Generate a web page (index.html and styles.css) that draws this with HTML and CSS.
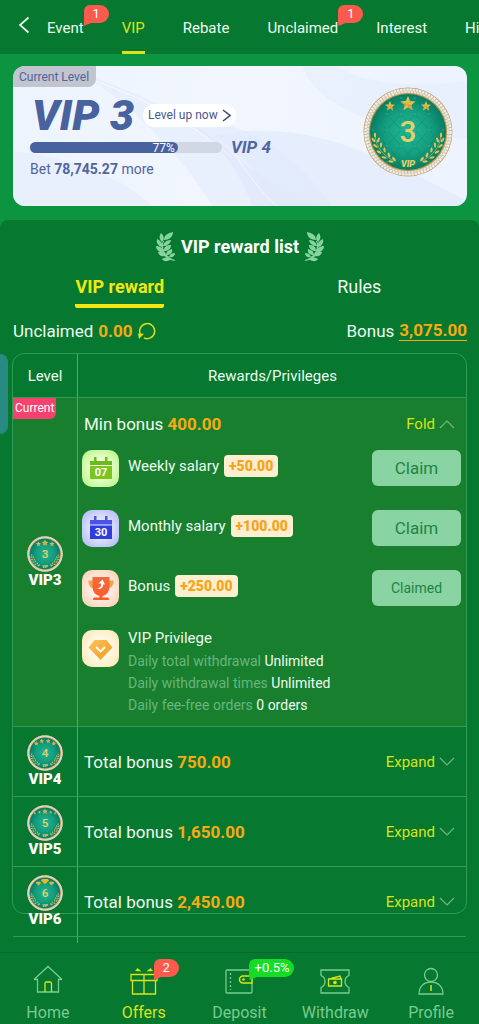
FILE: index.html
```html
<!DOCTYPE html>
<html lang="en">
<head>
<meta charset="utf-8">
<meta name="viewport" content="width=device-width, initial-scale=1">
<title>VIP</title>
<link rel="stylesheet" href="styles.css">
</head>
<body>
<svg class="defs" width="0" height="0" aria-hidden="true">
  <defs>
    <radialGradient id="teal"><stop offset="0" stop-color="#1fb896"/><stop offset=".6" stop-color="#149f80"/><stop offset="1" stop-color="#067d63"/></radialGradient>
    <linearGradient id="gold" x1="0" y1="0" x2="1" y2="1"><stop offset="0" stop-color="#fbe9a0"/><stop offset=".5" stop-color="#e2b53c"/><stop offset="1" stop-color="#f5dd85"/></linearGradient>
    <linearGradient id="amber" x1="0" y1="0" x2="1" y2="1"><stop offset="0" stop-color="#fcc35a"/><stop offset="1" stop-color="#f39a1c"/></linearGradient>
    <linearGradient id="flame" x1="0" y1="0" x2="0" y2="1"><stop offset="0" stop-color="#f26a3c"/><stop offset="1" stop-color="#ff5a2c"/></linearGradient>
    <pattern id="quilt" width="14" height="16" patternUnits="userSpaceOnUse" x="3" y="3"><path d="M0 0L14 16M14 0L0 16" stroke="#0b7f66" stroke-width="1" opacity=".4"/><circle cx="7" cy="8" r=".8" fill="#5fdcbb" opacity=".5"/></pattern>
    <symbol id="star" viewBox="0 0 20 20"><path d="M10 0l2.700 6.800 7.300.5-5.600 4.700 1.800 7.100L10 15.200 3.800 19.100l1.800-7.100L0 7.300l7.300-.5z" fill="url(#gold)"/><path d="M10 0v11l4.400 1 1.800 7.100L10 15.200zM10 11L0 7.300l5.600 4.700z" fill="#c98a26" opacity=".55"/></symbol>
    <g id="spray" fill="url(#gold)">
      <path d="M12 48c1 12 8 21 20 26" fill="none" stroke="#d9b450" stroke-width=".7"/>
      <ellipse cx="12" cy="48" rx="1.100" ry="2.600"/>
      <ellipse cx="10.500" cy="53" rx="1.100" ry="2.600" transform="rotate(-35 10.500 53)"/><ellipse cx="15.500" cy="53" rx="1.100" ry="2.600" transform="rotate(25 15.500 53)"/>
      <ellipse cx="12.500" cy="59" rx="1.100" ry="2.600" transform="rotate(-50 12.500 59)"/><ellipse cx="18" cy="58" rx="1.100" ry="2.600" transform="rotate(5 18 58)"/>
      <ellipse cx="16" cy="65" rx="1.100" ry="2.600" transform="rotate(-60 16 65)"/><ellipse cx="21.500" cy="63" rx="1.100" ry="2.600" transform="rotate(-5 21.500 63)"/>
      <ellipse cx="21" cy="70.500" rx="1.100" ry="2.600" transform="rotate(-75 21 70.500)"/><ellipse cx="26" cy="68" rx="1.100" ry="2.600" transform="rotate(-20 26 68)"/>
      <ellipse cx="28" cy="74.500" rx="1.100" ry="2.600" transform="rotate(-85 28 74.500)"/><ellipse cx="31" cy="72" rx="1.100" ry="2.600" transform="rotate(-35 31 72)"/>
    </g>
    <g id="medal">
      <circle cx="45" cy="45" r="44.500" fill="#c7a35b"/>
      <circle cx="45" cy="45" r="41.500" fill="none" stroke="#c4bdae" stroke-width="4.800"/>
      <circle cx="45" cy="45" r="42.500" fill="none" stroke="#f6f2e8" stroke-width="2.200" stroke-dasharray="2.200 1"/>
      <circle cx="45" cy="45" r="40.200" fill="none" stroke="#eae5d8" stroke-width="2" stroke-dasharray="2.200 1"/>
      <circle cx="45" cy="45" r="38.800" fill="#b9923e"/>
      <circle cx="45" cy="45" r="38" fill="url(#teal)"/>
      <circle cx="45" cy="45" r="38" fill="url(#quilt)"/>
      <use href="#spray"/><use href="#spray" transform="translate(90 0) scale(-1 1)"/>
    </g>
    <symbol id="laurel" viewBox="0 0 20 30">
      <g fill="#86d39d"><path d="M8 9C5 16 9 25 19 28l-.5 1C7 27 3 17 7 9z"/>
      <path d="M8 8C8 3 12 1 17 0c0 5-4 8-9 8zM6 10C3 7 3 4 5 1c3 3 4 6 1 9zM6 15C2 14 0 11 1 7c4 2 6 4 5 8zM7 14c1-4 4-6 8-6-1 4-4 6-8 6zM7 20c-4 0-7-2-7-6 4 0 7 2 7 6zM8 19c0-4 2-6 7-6 0 4-3 6-7 6zM10 24c-4 1-7 0-8-4 4-1 7 1 8 4zM10 23c0-3 2-5 6-6 1 4-2 6-6 6zM15 27c-3 3-7 3-9 0 3-2 7-2 9 0zM13 25c1-3 3-4 6-4 0 3-2 5-6 4z"/></g>
    </symbol>
    <symbol id="chevron" viewBox="0 0 16 10"><path d="M1 1l7 7 7-7" fill="none" stroke="#72b583" stroke-width="1.200"/></symbol>
  </defs>
</svg>

<header class="topbar">
  <button class="back" type="button" aria-label="Back"><svg width="12" height="18" viewBox="0 0 12 18"><path d="M10.500 1.500L2 9l8.500 7.500" fill="none" stroke="#e8fbe9" stroke-width="1.700"/></svg></button>
  <nav class="tabs">
    <a href="#event">Event<span class="badge">1</span></a>
    <a href="#vip" class="active">VIP</a>
    <a href="#rebate">Rebate</a>
    <a href="#unclaimed">Unclaimed<span class="badge">1</span></a>
    <a href="#interest">Interest</a>
    <a href="#history">History</a>
  </nav>
</header>

<section class="hero">
  <div class="card">
    <svg class="swirl" viewBox="0 0 455 140" preserveAspectRatio="none" aria-hidden="true">
      <path d="M70 8c60 20 110 45 145 76s60 40 90 56H200C170 90 120 40 70 8z" fill="#e2ebfb" opacity=".6"/>
      <path d="M150 42c70 12 120 30 170 98H240c-15-40-40-75-90-98z" fill="#d6e2f6" opacity=".35"/>
      <path d="M200 70c90-20 170 20 255 65v5H260c-10-30-30-55-60-70z" fill="#dfe9fb" opacity=".6"/>
      <path d="M290 0c10 30 50 50 90 62 25 8 50 10 75 10V15C400 22 350 18 325 0z" fill="#e6eefd" opacity=".7"/>
      <path d="M0 85c50 5 100 20 140 55H0z" fill="#e4edfb" opacity=".6"/>
      <path d="M75 12c60 22 105 45 145 80M222 88c12 18 25 36 42 52" fill="none" stroke="#fff" stroke-width="1" opacity=".6"/>
    </svg>
    <span class="current-level">Current Level</span>
    <div class="card-body">
      <div class="level">
        <div class="level-head"><h1>VIP 3</h1><button class="level-up" type="button">Level up now<svg width="9" height="13" viewBox="0 0 9 13"><path d="M1 1l7 5.500L1 12" fill="none" stroke="#3b4674" stroke-width="1.500"/></svg></button></div>
        <div class="progress-row"><div class="bar" role="progressbar" aria-label="Level progress" aria-valuenow="77" aria-valuemin="0" aria-valuemax="100"><div class="fill" style="width:77%">77%</div></div><span class="next">VIP 4</span></div>
        <p class="bet">Bet <b>78,745.27</b> more</p>
      </div>
      <svg class="medal-lg" viewBox="0 0 90 90" role="img" aria-label="VIP 3 medal">
        <use href="#medal"/>
        <use href="#star" x="22" y="14" width="10" height="10"/><use href="#star" x="37.500" y="9" width="15" height="15"/><use href="#star" x="58" y="14" width="10" height="10"/>
        <text class="num" x="45" y="55">3</text><text class="vip" x="45" y="80">VIP</text>
      </svg>
    </div>
  </div>
</section>

<main class="panel">
  <h2><svg width="20" height="30"><use href="#laurel"/></svg>VIP reward list<svg class="flip" width="20" height="30"><use href="#laurel"/></svg></h2>
  <nav class="subtabs"><a href="#reward" class="active">VIP reward</a><a href="#rules">Rules</a></nav>
  <div class="totals">
    <span class="total">Unclaimed <b>0.00</b>
      <button class="refresh" type="button" aria-label="Refresh"><svg width="18" height="18" viewBox="0 0 18 18"><path d="M2.500 12.500A7.500 7.500 0 1 1 6 15.900" fill="none" stroke="#d5e21c" stroke-width="1.500"/><path d="M0 11.500l6 .3L1 17z" fill="#d5e21c"/></svg></button></span>
    <span class="total">Bonus <a href="#records">3,075.00</a></span>
  </div>
  <div class="frame">
    <table>
      <thead><tr><th class="lv">Level</th><th>Rewards/Privileges</th></tr></thead>
      <tbody>
        <tr class="open">
          <td class="lv"><span class="current">Current</span>
            <svg class="medal" viewBox="0 0 90 90"><use href="#medal"/><use href="#star" x="22" y="13" width="13" height="13"/><use href="#star" x="37" y="9" width="16" height="16"/><use href="#star" x="56" y="13" width="13" height="13"/><text class="num" x="45" y="55">3</text><text class="vip" x="45" y="80">VIP</text></svg>
            <span class="name">VIP3</span></td>
          <td>
            <div class="summary"><span>Min bonus <b>400.00</b></span><button type="button">Fold<svg class="up" width="16" height="10"><use href="#chevron"/></svg></button></div>
            <ul class="rewards">
              <li>
                <svg class="tile green" viewBox="0 0 37 37"><path d="M8 11h22v4H8zM8 16h22v13H8z" fill="#6cba1b"/><path d="M8 16h22v13H8z" fill="#7cc51e"/><path d="M12 7h2.500v6H12zM23 7h2.500v6H23z" fill="#6cba1b"/><text x="19" y="26">07</text></svg>
                <span class="label">Weekly salary <b>+50.00</b></span><button type="button">Claim</button></li>
              <li>
                <svg class="tile blue" viewBox="0 0 37 37"><path d="M8 10h22v4.500H8z" fill="#4b54e8"/><path d="M8 15.500h22V29H8z" fill="#2f3ddf"/><path d="M12 6h2.500v6H12zM23 6h2.500v6H23z" fill="#4b54e8"/><text x="19" y="26">30</text></svg>
                <span class="label">Monthly salary <b>+100.00</b></span><button type="button">Claim</button></li>
              <li>
                <svg class="tile red" viewBox="0 0 37 37"><path d="M6.500 10.500H12V19C8.500 18 6 14.500 6.500 10.500zM26 10.500h5.500C32 14.500 29.500 18 26 19z" fill="#f9a24b"/><path d="M10.500 7h17v9c0 6-3 9-7 10v1.500h4.500c1.500 0 2 .5 2 2.500H11c0-2 .5-2.500 2-2.500h4.500V26c-4-1-7-4-7-10z" fill="url(#flame)"/><path d="M15 18.500c3.500-.5 4.500-2.500 4-5h-2.500l4-4 2.500 5h-2c.5 3-2 5.500-6 4z" fill="#fff"/></svg>
                <span class="label">Bonus <b>+250.00</b></span><button type="button" class="claimed" disabled>Claimed</button></li>
              <li>
                <svg class="tile yellow" viewBox="0 0 37 37"><path d="M12.500 10h12l6 7.500L18.500 30 6.500 17.500z" fill="url(#amber)"/><path d="M14 17l4.500 4.500L23 17" fill="none" stroke="#fff" stroke-width="1.800"/></svg>
                <div class="privilege"><h3>VIP Privilege</h3><p>Daily total withdrawal <span>Unlimited</span></p><p>Daily withdrawal times <span>Unlimited</span></p><p>Daily fee-free orders <span>0 orders</span></p></div></li>
            </ul>
          </td>
        </tr>
        <tr class="shut">
          <td class="lv"><svg class="medal" viewBox="0 0 90 90"><use href="#medal"/><use href="#star" x="17" y="15" width="12" height="12"/><use href="#star" x="31" y="9" width="12" height="12"/><use href="#star" x="47" y="9" width="12" height="12"/><use href="#star" x="61" y="15" width="12" height="12"/><text class="num" x="45" y="55">4</text><text class="vip" x="45" y="80">VIP</text></svg><span class="name">VIP4</span></td>
          <td><div class="summary"><span>Total bonus <b>750.00</b></span><button type="button">Expand<svg width="16" height="10"><use href="#chevron"/></svg></button></div></td>
        </tr>
        <tr class="shut">
          <td class="lv"><svg class="medal" viewBox="0 0 90 90"><use href="#medal"/><use href="#star" x="16" y="17" width="7" height="7"/><use href="#star" x="27" y="14" width="8" height="8"/><use href="#star" x="38" y="9" width="14" height="14"/><use href="#star" x="55" y="14" width="8" height="8"/><use href="#star" x="67" y="17" width="7" height="7"/><text class="num" x="45" y="55">5</text><text class="vip" x="45" y="80">VIP</text></svg><span class="name">VIP5</span></td>
          <td><div class="summary"><span>Total bonus <b>1,650.00</b></span><button type="button">Expand<svg width="16" height="10"><use href="#chevron"/></svg></button></div></td>
        </tr>
        <tr class="shut">
          <td class="lv"><svg class="medal" viewBox="0 0 90 90"><use href="#medal"/><path d="M38 10h14l3 4-10 9-10-9zM24 17h9l2 3-6 6-7-6zM57 17h9l2 3-7 6-6-6z" fill="#e8b62c"/><text class="num" x="45" y="55">6</text><text class="vip" x="45" y="80">VIP</text></svg><span class="name">VIP6</span></td>
          <td><div class="summary"><span>Total bonus <b>2,450.00</b></span><button type="button">Expand<svg width="16" height="10"><use href="#chevron"/></svg></button></div></td>
        </tr>
        <tr class="tail" aria-hidden="true"><td class="lv"></td><td></td></tr>
      </tbody>
    </table>
  </div>
</main>

<nav class="bottom">
  <a href="#home"><svg width="32" height="30" viewBox="0 0 32 30"><path d="M2 14.500L16 1.500l14 13M5.500 14.500H2M30 14.500h-3.500M5.500 13.500V27h21V13.500" fill="none" stroke="#79cb90" stroke-width="1.300"/><path d="M13 27V18.500q0-1.500 1.500-1.500h3.500q1.500 0 1.500 1.500V27" fill="none" stroke="#d9e31a" stroke-width="1.300"/></svg>Home</a>
  <a href="#offers" class="active"><svg width="32" height="30" viewBox="0 0 32 30"><path d="M3 9.500h26v6H3zM4.500 15.500h23V29h-23zM16 9.500V29" fill="none" stroke="#d9e31a" stroke-width="1.300"/><path d="M7 6l2.500-3 4 3.500zM25 6l-2.500-3-4 3.500z" fill="#d9e31a"/></svg><span class="badge">2</span>Offers</a>
  <a href="#deposit"><svg width="32" height="30" viewBox="0 0 32 30"><path d="M29 5H4q-1 0-1 1v21q0 1 1 1h24q1 0 1-1v-9M29 5v6" fill="none" stroke="#79cb90" stroke-width="1.300"/><path d="M7.500 8v17" stroke="#79cb90" stroke-width="1.300" stroke-dasharray="2 2"/><path d="M29 11h-9a3.500 3.500 0 0 0 0 7h9z" fill="none" stroke="#d9e31a" stroke-width="1.500"/><circle cx="20.500" cy="14.500" r="1.300" fill="#d9e31a"/></svg><span class="badge lime">+0.5%</span>Deposit</a>
  <a href="#withdraw"><svg width="32" height="30" viewBox="0 0 32 30"><path d="M2 5h28v5.500a6.500 6.500 0 0 0 0 12V28H2v-5.500a6.500 6.500 0 0 0 0-12z" fill="none" stroke="#79cb90" stroke-width="1.300"/><path d="M9.500 14h13v7h-13zM12 13.500l9-2.500.8 2.500" fill="none" stroke="#d9e31a" stroke-width="1.300"/><circle cx="16" cy="17.500" r="1.800" fill="#d9e31a"/></svg>Withdraw</a>
  <a href="#profile"><svg width="32" height="30" viewBox="0 0 32 30"><circle cx="16" cy="10" r="6.500" fill="none" stroke="#79cb90" stroke-width="1.300"/><path d="M4 29c0-7 4.500-12 12-12s12 5 12 12z" fill="none" stroke="#79cb90" stroke-width="1.300"/><path d="M16 20v6" stroke="#d9e31a" stroke-width="1.500"/></svg>Profile</a>
</nav>
<button class="side-handle" type="button" aria-label="Open side panel"></button>
</body>
</html>
```
FILE: styles.css
```css
* { box-sizing: border-box; }
body { margin: 0; height: 100vh; display: flex; flex-direction: column; position: relative; overflow: hidden; background: #067830; color: #eefbef; font-family: Roboto, "Liberation Sans", sans-serif; }
a { color: inherit; text-decoration: none; }
button { font: inherit; color: inherit; border: 0; background: none; padding: 0; }
h1, h2, h3, p, ul { margin: 0; padding: 0; }
ul { list-style: none; }
.defs { position: absolute; }

.topbar { height: 54px; display: flex; flex: none; }
.back { width: 47px; flex: none; padding: 0 0 4px; line-height: 0; }
.tabs { flex: 1; min-width: 0; display: flex; gap: 38px; overflow: hidden; font-size: 15px; line-height: 56px; }
.tabs a { position: relative; flex: none; height: 54px; }
.tabs .active { color: #d9e31a; border-bottom: 3px solid #d9e31a; }
.badge { position: absolute; left: 100%; top: 5px; width: 25px; height: 18px; border-radius: 6px 9px 9px 0; background: #fb5b4c; color: #fff; font-size: 13px; line-height: 18px; text-align: center; }
.badge::after { content: ""; position: absolute; left: 0; bottom: -3px; width: 8px; height: 8px; background: inherit; clip-path: polygon(0 0, 100% 0, 100% 60%, 0 100%); }

.hero { flex: none; padding: 12px 12px 22px 13px; background: #0d9440; }
.card { position: relative; height: 140px; border-radius: 12px; overflow: hidden; background: linear-gradient(100deg, #eef4fe, #f1f6ff 50%, #edf3ff); color: #50649f; }
.swirl { position: absolute; inset: 0; width: 100%; height: 100%; }
.current-level { position: absolute; left: 0; top: 0; padding: 0 7px 0 6px; height: 21px; font-size: 12px; line-height: 23px; background: #c2c5ce; border-radius: 0 0 8px 0; }
.card-body { position: relative; display: flex; justify-content: space-between; align-items: center; padding: 0 14px 0 17px; }
.level { flex: 1; padding-top: 27px; }
.level-head { display: flex; align-items: center; gap: 9px; height: 44px; padding-left: 2px; }
.level-head h1 { font-size: 43px; line-height: 44px; font-weight: 900; font-style: italic; color: #48619f; }
.level-up { display: flex; align-items: center; gap: 4px; height: 23px; padding: 0 5px; border-radius: 12px; background: #fff; font-size: 12px; color: #48578d; }
.progress-row { display: flex; align-items: center; gap: 9px; height: 20px; }
.bar { width: 192px; height: 11px; border-radius: 6px; background: #d2d8e3; }
.fill { height: 11px; border-radius: 6px; background: #48619f; color: #fff; font-size: 12px; line-height: 12px; text-align: right; padding-right: 3px; }
.next { font-size: 17px; font-weight: 700; font-style: italic; }
.bet { font-size: 14px; line-height: 24px; }
.medal-lg { width: 90px; height: 90px; margin-top: 16px; }
.num { font: 500 29px Roboto, sans-serif; text-anchor: middle; fill: #e9cf6a; }
.vip { font: italic 900 9px Roboto, sans-serif; text-anchor: middle; fill: #e9cf6a; }

.panel { position: relative; flex: 1; min-height: 0; display: flex; flex-direction: column; margin: -8px 0 9px; padding: 0 12px 29px 13px; overflow: hidden; background: #067830; border-radius: 8px 8px 0 0; }
.panel h2 { flex: none; display: flex; justify-content: center; align-items: center; gap: 5px; padding-top: 11px; height: 42px; font-size: 18px; font-weight: 700; color: #fff; }
.flip { transform: scaleX(-1); }
.subtabs { flex: none; display: grid; grid-template-columns: 1fr 1fr; justify-items: center; margin: 0 -12px 0 -13px; height: 46px; font-size: 18px; line-height: 34px; }
.subtabs a { padding-top: 8px; }
.subtabs .active { font-weight: 700; color: #f2e713; border-bottom: 4px solid #f2e713; border-radius: 2px; }
.totals { flex: none; display: flex; justify-content: space-between; align-items: center; height: 45px; font-size: 17px; }
.total { display: flex; align-items: center; gap: 5px; }
.total b, .total a { color: #f5ab13; font-weight: 700; }
.total a { border-bottom: 1px solid #f5ab13; line-height: 19px; }
.refresh { line-height: 0; }

.frame { flex: 1; min-height: 0; margin-left: -1px; border: 1px solid #2f9b55; border-radius: 12px; }
table { width: 100%; border-spacing: 0; }
th, td { padding: 0 5px 0 6px; border-bottom: 1px solid #339a57; }
.lv { position: relative; width: 65px; padding: 0; border-right: 1px solid #4aab6a; text-align: center; }
th { height: 44px; font-size: 15px; font-weight: 400; }
.open td { background: #187f2e; }
.shut td { height: 70px; }
.tail td { height: 30px; border-bottom: 0; }
.current { position: absolute; left: 0; top: 0; height: 21px; padding: 0 2px; background: #f7426f; color: #fff; font-size: 12px; line-height: 21px; border-radius: 0 0 6px 0; }
.medal { display: block; width: 36px; height: 36px; margin: 0 auto; }
.name { display: block; color: #fff; font-size: 15px; line-height: 17px; font-weight: 900; }
.summary { display: flex; justify-content: space-between; align-items: center; height: 52px; padding-right: 6px; font-size: 17px; }
.summary b { color: #f5ab13; font-weight: 700; }
.summary button { display: flex; align-items: center; gap: 4px; font-size: 15px; color: #d9e31a; }
.up { transform: scaleY(-1); }
.rewards { display: grid; gap: 23px; padding-bottom: 10px; }
.rewards li { display: flex; align-items: flex-start; gap: 9px; min-height: 37px; margin-left: -2px; font-size: 15px; }
.label { flex: 1; display: flex; align-items: center; gap: 5px; height: 32px; white-space: nowrap; }
.label b { height: 22px; line-height: 22px; padding: 0 5px; border-radius: 4px; background: #fdefcf; color: #f6a41c; font-size: 14px; font-weight: 900; }
.rewards button { width: 89px; height: 36px; border-radius: 6px; background: #8ad3a3; color: #1f8544; font-size: 17px; }
.rewards .claimed { font-size: 14px; }
.tile { flex: none; width: 37px; height: 37px; border-radius: 10px; }
.tile text { font: 700 11px Roboto, sans-serif; text-anchor: middle; fill: #fff; }
.green { background: radial-gradient(#f2ffd8 30%, #adf379); }
.blue { background: radial-gradient(#e8eaff 30%, #a8b3f8); }
.red { background: radial-gradient(#fff3ec 30%, #fcc9a9); }
.yellow { background: radial-gradient(#fffaf0 30%, #fce6a8); }
.privilege h3 { font-size: 15px; line-height: 17px; font-weight: 400; margin-bottom: 3px; }
.privilege p { font-size: 14px; line-height: 22px; color: #68b57e; }
.privilege span { color: #eefbef; }

.bottom { flex: none; height: 72px; display: grid; grid-template-columns: repeat(5, 1fr); border-top: 1px solid #05692a; color: #79cb90; font-size: 16px; }
.bottom a { position: relative; display: flex; flex-direction: column; align-items: center; padding-top: 12px; gap: 7px; line-height: 22px; }
.bottom svg { flex: none; }
.bottom .active { color: #d9e31a; }
.bottom .badge { left: 50%; top: 6px; margin-left: 10px; line-height: 18px; }
.bottom .lime { width: 45px; background: #16dc25; }
.side-handle { position: absolute; left: 0; top: 354px; width: 8px; height: 80px; border-radius: 0 8px 8px 0; background: #298a82; }
```
